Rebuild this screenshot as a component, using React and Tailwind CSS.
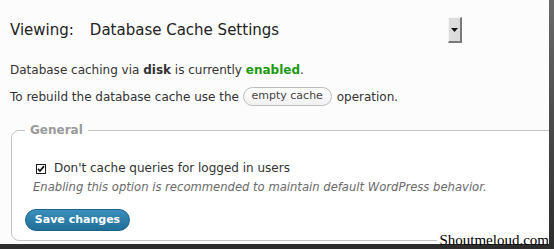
import React from 'react';

const sans = { fontFamily: '"DejaVu Sans", Verdana, sans-serif' };

export default function App() {
  return (
    <div className="relative w-[554px] h-[249px] bg-gradient-to-b from-[#6a6a6a] to-[#2c2c2c] overflow-hidden">
      <div
        className="w-[549px] h-[244px] bg-[#fcfcfc] overflow-hidden text-[#333]"
        style={sans}
      >
        {/* Heading + select */}
        <div className="mt-[17px] h-[26px] flex items-center pl-[10px] text-[15px] leading-none text-[#222]">
          <span>Viewing:</span>
          <div className="ml-[16px] w-[372px] flex items-center justify-between">
            <span>Database Cache Settings</span>
            <span className="w-[14px] h-[26px] flex items-center justify-center bg-[#dcdcdc] border-t border-l border-t-[#f4f4f4] border-l-[#f4f4f4] border-r-2 border-b-2 border-r-[#7a7a7a] border-b-[#7a7a7a]">
              <svg width="7" height="4" viewBox="0 0 7 4">
                <path d="M0 0h7L3.5 4z" fill="#111" />
              </svg>
            </span>
          </div>
        </div>

        {/* Status */}
        <p className="mt-[19px] h-[16px] leading-[16px] pl-[10px] text-[12px]">
          Database caching via <b>disk</b> is currently{' '}
          <b className="text-[#1a9a0f]">enabled</b>.
        </p>

        {/* Rebuild */}
        <div className="mt-[9px] h-[19px] flex items-center pl-[10px] text-[12px]">
          <span className="whitespace-pre">To rebuild the database cache use the </span>
          <span className="h-[19px] w-[89px] flex items-center justify-center rounded-full border border-[#bdbdbd] bg-gradient-to-b from-white to-[#f1f1f1] text-[11px] text-[#444]">
            empty cache
          </span>
          <span className="ml-[5px]">operation.</span>
        </div>

        {/* General fieldset */}
        <fieldset className="mt-[16px] ml-[11px] w-[560px] border border-[#c4c4c4] rounded-l-[8px] p-0 pb-[9px] bg-white">
          <legend className="ml-[13px] px-[5px] text-[12px] leading-[16px] font-bold text-[#9a9a9a]">
            General
          </legend>
          <label className="mt-[22px] ml-[24px] h-[16px] flex items-center text-[12px]">
            <span className="w-[10px] h-[10px] border border-[#1c1c1c] bg-white flex items-center justify-center mt-[2px]">
              <svg width="8" height="8" viewBox="0 0 8 8">
                <path d="M1 3.8l2 2.2L7 1.2" stroke="#111" strokeWidth="1.8" fill="none" />
              </svg>
            </span>
            <span className="ml-[8px]">Don't cache queries for logged in users</span>
          </label>
          <p className="mt-[4px] ml-[21px] text-[11.6px] leading-[14px] italic text-[#6a6a6a]">
            Enabling this option is recommended to maintain default WordPress behavior.
          </p>
          <button className="mt-[15px] ml-[13px] w-[105px] h-[22px] rounded-full border border-[#1d6389] bg-gradient-to-b from-[#3b8fbb] to-[#1f6f98] text-white text-[11px] font-bold flex items-center justify-center">
            Save changes
          </button>
        </fieldset>
      </div>

      {/* Watermark */}
      <span
        className="absolute right-[5px] bottom-0 pl-[2px] text-[15px] leading-[17px] text-black bg-[linear-gradient(to_bottom,#fcfcfc_0,#fcfcfc_12px,transparent_12px)]"
        style={{ fontFamily: '"Liberation Serif", "Times New Roman", serif' }}
      >
        Shoutmeloud.com
      </span>
    </div>
  );
}
